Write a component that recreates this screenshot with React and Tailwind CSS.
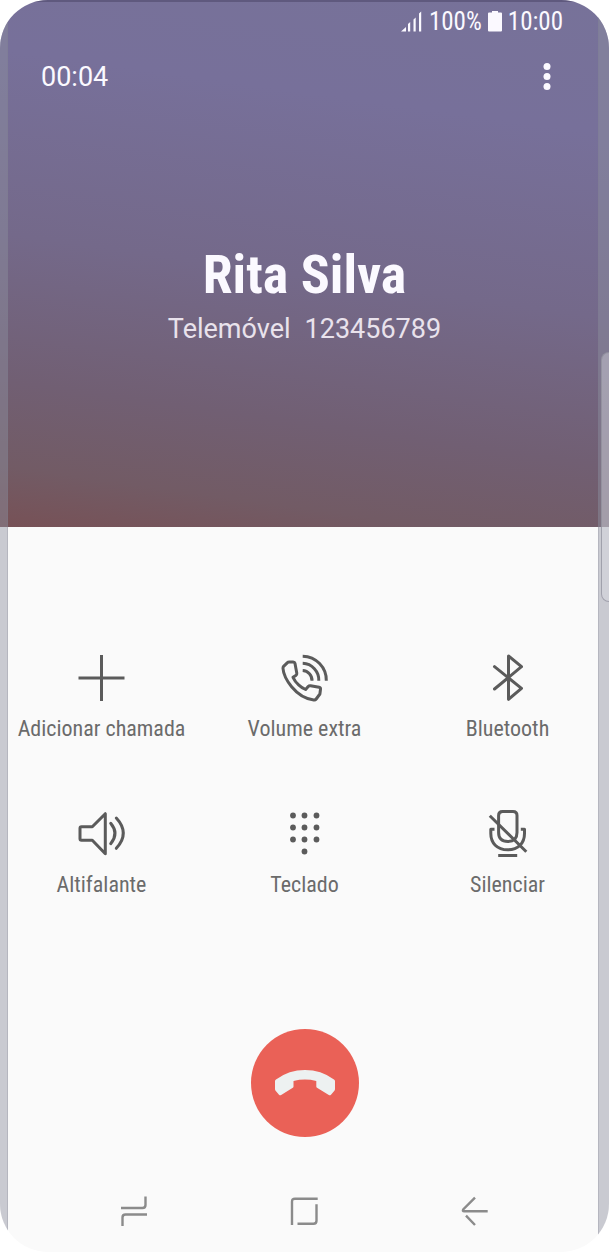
import React, { useEffect, useState } from 'react';

const iconProps = {
  viewBox: '0 0 48 48',
  fill: 'none',
  stroke: 'currentColor',
  strokeWidth: 3,
  strokeLinejoin: 'round',
  className: 'h-12 w-12 overflow-visible text-[#5b5b5b]',
  'aria-hidden': true,
};

const PlusIcon = () => (
  <svg {...iconProps}>
    <path d="M23.500 1v46M.5 24h46" />
  </svg>
);

const VolumeIcon = () => (
  <svg {...iconProps}>
    <path d="M6.200 8.800Q7 8 8.300 8h3.900q1.500 0 1.800 1.400l1.800 9.800q.2 1.400-1 2.200L12 23.300q2 4.300 5.600 7.500 3.200 3 7 4.700l2.600-3q.9-1 2.300-.8l8.600 1.600q1.600.3 1.400 1.900l-.6 4.800-3.700 5q-.9 1.200-2.400 1C24 45 16.500 40 10.600 32.800 5.600 26.500 2.400 20 2 14.500q-.1-1.400.6-2.200z" />
    <path d="M21.700 2.200a24 24 0 0 1 23.600 24.500M21.700 9.300a16.700 16.700 0 0 1 16.100 17.400M21.700 16.500a9.800 9.800 0 0 1 9.300 10.200" />
  </svg>
);

const BluetoothIcon = () => (
  <svg {...iconProps} strokeLinecap="round">
    <path d="M10.500 12.700l27 21.600-13 11V2l13 10.700L10.500 35" />
  </svg>
);

const SpeakerIcon = () => (
  <svg {...iconProps} strokeLinecap="round">
    <path d="M3.500 16.700h10.800l13-13v40l-13-13.400H3.500Q2 30.300 2 28.800V18.200q0-1.500 1.500-1.500z" />
    <path d="M32.700 13.300q8.600 10.200 0 20.400M38.300 8q14 15.200 0 30.300" />
  </svg>
);

const dots = [
  [12, 5.5], [23.5, 5.5], [35.500, 5.5],
  [12, 17.5], [23.5, 17.5], [35.500, 17.5],
  [12, 29.5], [23.5, 29.5], [35.500, 29.5],
  [23.5, 41.5],
];

const KeypadIcon = () => (
  <svg {...iconProps} fill="currentColor" stroke="none">
    {dots.map(([x, y]) => (
      <circle key={`${x}-${y}`} cx={x} cy={y} r="2.9" />
    ))}
  </svg>
);

const MuteIcon = () => (
  <svg {...iconProps}>
    <path d="M18.500 1.500H29q4 0 4 4v17q0 9-9.200 9t-9.200-9v-17q0-4 3.900-4z" />
    <path d="M10.500 19.300H6.800v4.200c0 9.500 6.200 16.300 16.900 16.300s16.800-6.800 16.800-16.300v-4.200h-3.700" />
    <path d="M5.800 5.700l36.500 36M14.200 45.500h19" />
  </svg>
);

const actions = [
  { label: 'Adicionar chamada', icon: PlusIcon },
  { label: 'Volume extra', icon: VolumeIcon },
  { label: 'Bluetooth', icon: BluetoothIcon },
  { label: 'Altifalante', icon: SpeakerIcon },
  { label: 'Teclado', icon: KeypadIcon },
  { label: 'Silenciar', icon: MuteIcon },
];

const navItems = [
  {
    label: 'Recentes',
    path: 'M2 12h21.500q3 0 3-3V.5M28 18.500H6.500q-3 0-3 3V30',
  },
  {
    label: 'Início',
    path: 'M2 29V5.700q0-3 3-3h22.700M26.500 8.300v16.400q0 3-3 3H7.500',
  },
  {
    label: 'Voltar',
    path: 'M14 1.700L2.200 13.500q-1 1.800 1 1.800h23.500M5 19.700l9 9.300',
  },
];

const StatusBar = () => (
  <div className="flex h-[42px] items-center justify-end pr-[46px] font-['Roboto_Condensed',Roboto,sans-serif] text-[25px] leading-none">
    <svg viewBox="0 0 21 21" className="mr-[7px] h-[21px] w-[21px]" fill="currentColor" aria-hidden="true">
      <path d="M0 20.500L5 16v4.500zM7 13l2.200-2v9.500H7zM12.500 8.500l2.200-2v14h-2.200zM18 2.500L20.200.5v20H18z" />
    </svg>
    <span>100%</span>
    <svg viewBox="0 0 14 21" className="mx-[6px] h-[21px] w-[14px]" fill="currentColor" aria-hidden="true">
      <path d="M4 0h6v1.500h3q1 0 1 1v17q0 1-1 1H1q-1 0-1-1v-17q0-1 1-1h3z" />
    </svg>
    <span>10:00</span>
  </div>
);

const formatTime = (seconds) => {
  const m = String(Math.floor(seconds / 60)).padStart(2, '0');
  const s = String(seconds % 60).padStart(2, '0');
  return `${m}:${s}`;
};

const CallHeader = ({ name, type, number, seconds }) => (
  <header className="bg-[linear-gradient(188deg,#777299_0%,#77709a_22%,#74698a_52%,#715f73_76%,#725b65_90%,#775156_100%)] text-[#fbf9ff]">
    <StatusBar />
    <div className="flex h-[70px] items-center justify-between pr-[46px] pl-[41px]">
      <span className="font-[Roboto,sans-serif] text-[27px] leading-none">{formatTime(seconds)}</span>
      <button type="button" aria-label="Mais opções" className="flex h-10 w-8 items-center justify-center">
        <svg viewBox="0 0 8 28" className="h-7 w-2" fill="currentColor" aria-hidden="true">
          <circle cx="4" cy="3.5" r="3.5" />
          <circle cx="4" cy="13.5" r="3.5" />
          <circle cx="4" cy="23.5" r="3.5" />
        </svg>
      </button>
    </div>
    <div className="pt-[131px] pb-[180px] text-center">
      <h1 className="font-['Roboto_Condensed',Roboto,sans-serif] text-[54px] leading-[64px] font-bold">{name}</h1>
      <p className="mt-[5px] font-[Roboto,sans-serif] text-[27px] leading-[35px] text-[#e9e2ec]">
        <span className="mr-[14px]">{type}</span>
        <span>{number}</span>
      </p>
    </div>
  </header>
);

const App = () => {
  const [seconds] = useState(4);

  useEffect(() => {
    document.title = 'Chamada em curso';
  }, []);

  return (
    <div className="bg-white">
      <div className="relative flex min-h-screen flex-col overflow-hidden rounded-[48px] bg-[#fafafa]">
        <CallHeader name="Rita Silva" type="Telemóvel" number="123456789" seconds={seconds} />

        <main className="flex flex-1 flex-col items-center pt-[127px]">
          <div className="grid w-full grid-cols-3 gap-y-[66px]">
            {actions.map(({ label, icon: Icon }) => (
              <button
                key={label}
                type="button"
                className="flex flex-col items-center gap-3 font-['Roboto_Condensed',Roboto,sans-serif] text-[22px] leading-[30px] whitespace-nowrap text-[#6b6b6b]"
              >
                <Icon />
                {label}
              </button>
            ))}
          </div>

          <button
            type="button"
            aria-label="Terminar chamada"
            className="mt-[129px] flex h-[108px] w-[108px] items-center justify-center rounded-full bg-[#ea6157]"
          >
            <svg viewBox="0 0 60 26" className="h-[26px] w-[60px]" fill="#edf1f1" aria-hidden="true">
              <path d="M0 11q0-1 1-1.600Q14 0 30 0t29 9.400q1 .6 1 1.600v8q0 1-.6 1.800L56 24.700q-1 1-2.200.3L42 17.700q-.7-.5-.7-1.300v-5.500Q30 8 18.500 10.900v5.500q0 .8-.7 1.300L6.200 25q-1.200.7-2.200-.3L.6 20.800Q0 20 0 19z" />
            </svg>
          </button>
        </main>

        <nav className="grid grid-cols-3 px-12 pb-[26px]">
          {navItems.map(({ label, path }) => (
            <button key={label} type="button" aria-label={label} className="flex justify-center">
              <svg
                viewBox="0 0 30 30"
                className="h-[30px] w-[30px] text-[#8b8b8b]"
                fill="none"
                stroke="currentColor"
                strokeWidth="2.4"
                aria-hidden="true"
              >
                <path d={path} />
              </svg>
            </button>
          ))}
        </nav>

        {/* Curved glass edges */}
        <div className="pointer-events-none absolute inset-x-0 top-0 h-0.5 bg-[#50496c]/60" />
        <div className="pointer-events-none absolute inset-y-0 left-0 w-2 border-r border-[#7c7c8c]/25 bg-[#8d919f]/45" />
        <div className="pointer-events-none absolute inset-y-0 right-0 w-[11px] border-l border-[#7c7c8c]/25 bg-[#8d919f]/45" />
        <div className="pointer-events-none absolute top-[352px] -right-2 h-[250px] w-4 rounded-[10px] border border-[#8b8b98]/70 bg-[#dcdce4]/40" />
      </div>
    </div>
  );
};

export default App;
